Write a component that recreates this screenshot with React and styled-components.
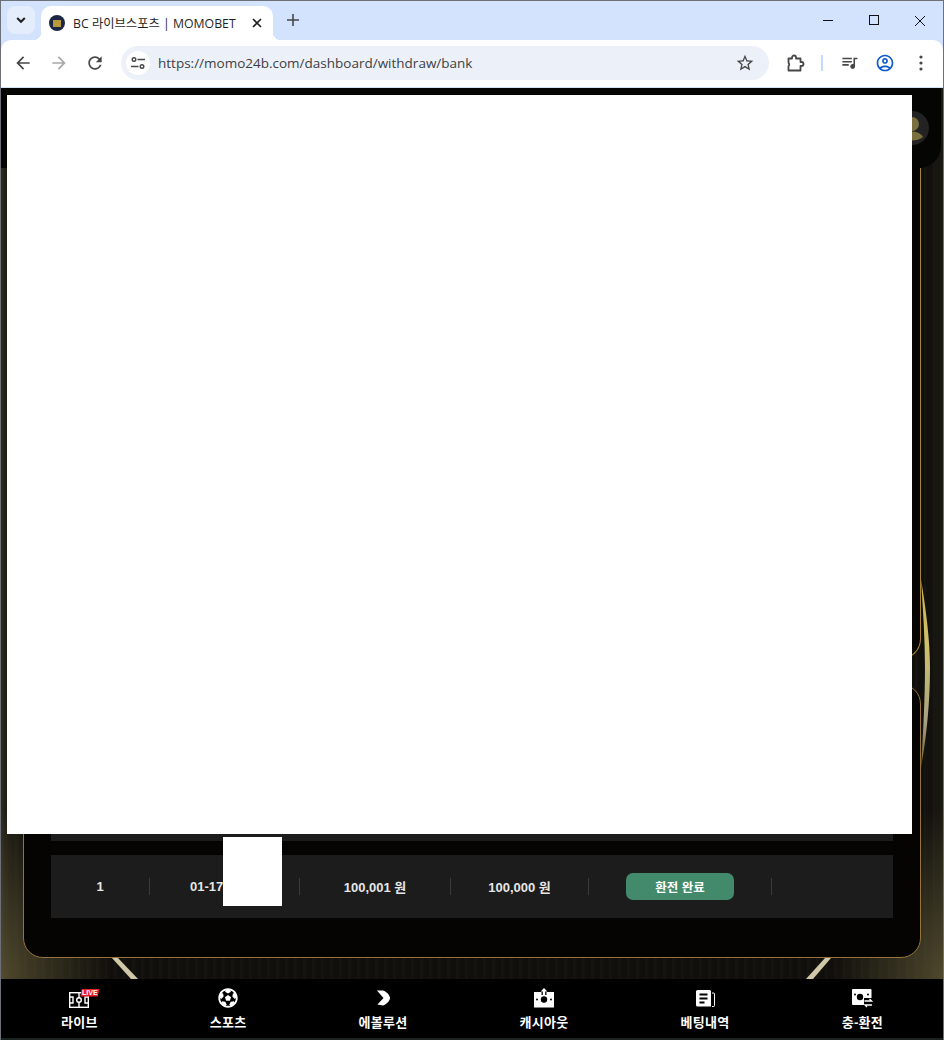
import React from 'react'
import styled, { createGlobalStyle } from 'styled-components'
import { FaFutbol } from 'react-icons/fa'

const GlobalStyle = createGlobalStyle`
    html, body { margin: 0; padding: 0; background: #000; }
    * { box-sizing: border-box; }
`

const UI_FONT = `"Open Sans", "Noto Sans CJK KR", sans-serif`
const PAGE_FONT = `"Liberation Sans", "Noto Sans CJK KR", sans-serif`

const ICONS = {
    back: 'M20 11H7.83l5.59-5.59L12 4l-8 8 8 8 1.41-1.41L7.83 13H20v-2z',
    forward: 'M12 4l-1.41 1.41L16.17 11H4v2h12.17l-5.58 5.59L12 20l8-8z',
    reload: 'M17.65 6.35C16.2 4.9 14.21 4 12 4c-4.42 0-7.99 3.58-7.99 8s3.57 8 7.99 8c3.73 0 6.84-2.55 7.73-6h-2.08c-.82 2.33-3.04 4-5.65 4-3.31 0-6-2.69-6-6s2.69-6 6-6c1.66 0 3.14.69 4.22 1.78L13 11h7V4l-2.35 2.35z',
    star: 'M22 9.24l-7.19-.62L12 2 9.19 8.63 2 9.24l5.46 4.73L5.82 21 12 17.27 18.18 21l-1.63-7.03L22 9.24zM12 15.4l-3.76 2.27 1-4.28-3.32-2.88 4.38-.38L12 6.1l1.71 4.04 4.38.38-3.32 2.88 1 4.28L12 15.4z',
    queue: 'M15 6H3v2h12V6zm0 4H3v2h12v-2zM3 16h8v-2H3v2zM17 6v8.18c-.31-.11-.65-.18-1-.18-1.66 0-3 1.34-3 3s1.34 3 3 3 3-1.34 3-3V8h3V6h-5z',
    account: 'M12 2C6.48 2 2 6.48 2 12s4.48 10 10 10 10-4.48 10-10S17.52 2 12 2zM7.35 18.5C8.66 17.56 10.26 17 12 17s3.34.56 4.65 1.5c-1.31.94-2.91 1.5-4.65 1.5s-3.34-.56-4.65-1.5zm10.79-1.38C16.45 15.8 14.32 15 12 15s-4.45.8-6.14 2.12C4.7 15.73 4 13.95 4 12c0-4.42 3.58-8 8-8s8 3.58 8 8c0 1.95-.7 3.73-1.86 5.12zM12 6c-1.93 0-3.5 1.57-3.5 3.5S10.07 13 12 13s3.5-1.57 3.5-3.5S13.93 6 12 6zm0 5c-.83 0-1.5-.67-1.5-1.5S11.17 8 12 8s1.5.67 1.5 1.5S12.83 11 12 11z',
}

const Glyph = ({ d, color = '#474747', size = 20 }) => (
    <svg width={size} height={size} viewBox="0 0 24 24" fill={color}><path d={d} /></svg>
)

const TitleBar = () => (
    <TabStrip>
        <TabSearch>
            <svg width="12" height="12" viewBox="0 0 12 12" fill="none" stroke="#1f1f1f" strokeWidth="2"><path d="M2.2 4l3.8 3.8L9.8 4" /></svg>
        </TabSearch>
        <Tab>
            <Favicon><FaviconCore /></Favicon>
            <TabTitle>BC 라이브스포츠 | MOMOBET</TabTitle>
            <svg width="10" height="10" viewBox="0 0 10 10" stroke="#1f1f1f" strokeWidth="1.6"><path d="M1 1l8 8M9 1l-8 8" /></svg>
        </Tab>
        <NewTab>
            <svg width="12" height="12" viewBox="0 0 12 12" stroke="#474747" strokeWidth="1.6"><path d="M6 0v12M0 6h12" /></svg>
        </NewTab>
        <WindowControls>
            <WindowButton>
                <svg width="11" height="11" viewBox="0 0 11 11" stroke="#111" strokeWidth="1"><path d="M0 5.5h10" /></svg>
            </WindowButton>
            <WindowButton>
                <svg width="11" height="11" viewBox="0 0 11 11" fill="none" stroke="#111" strokeWidth="1"><rect x=".5" y=".5" width="9" height="9" /></svg>
            </WindowButton>
            <WindowButton>
                <svg width="12" height="12" viewBox="0 0 12 12" stroke="#111" strokeWidth="1"><path d="M1 1l10 10M11 1L1 11" /></svg>
            </WindowButton>
        </WindowControls>
    </TabStrip>
)

const AddressBar = () => (
    <Toolbar>
        <ToolButton><Glyph d={ICONS.back} /></ToolButton>
        <ToolButton><Glyph d={ICONS.forward} color="#a8a8a8" /></ToolButton>
        <ToolButton>
            <svg width="20" height="20" viewBox="0 0 24 24"><path d={ICONS.reload} fill="#474747" /></svg>
        </ToolButton>
        <Omnibox>
            <SiteChip>
                <svg width="16" height="16" viewBox="0 0 16 16" fill="none" stroke="#474747" strokeWidth="1.4">
                    <circle cx="4" cy="4.5" r="1.8" />
                    <path d="M7.5 4.5H15M1 11.5h7.5" />
                    <circle cx="12" cy="11.5" r="1.8" />
                </svg>
            </SiteChip>
            <Url>https://momo24b.com/dashboard/withdraw/bank</Url>
            <Glyph d={ICONS.star} />
        </Omnibox>
        <ToolButton>
            <svg width="20" height="20" viewBox="0 0 20 20" fill="none" stroke="#474747" strokeWidth="1.8" strokeLinejoin="round">
                <path d="M3.500 5.500H7V4.500a2 2 0 0 1 4 0V5.500H15.500V9h1a2 2 0 0 1 0 4h-1V17.500H3.500V13.200a2.400 2.400 0 0 0 0-3.400z" />
            </svg>
        </ToolButton>
        <ToolDivider />
        <ToolButton><Glyph d={ICONS.queue} size={19} /></ToolButton>
        <ToolButton><Glyph d={ICONS.account} color="#0b57d0" size={20} /></ToolButton>
        <ToolButton>
            <svg width="4" height="16" viewBox="0 0 4 16" fill="#474747">
                <circle cx="2" cy="2" r="1.6" /><circle cx="2" cy="8" r="1.6" /><circle cx="2" cy="14" r="1.6" />
            </svg>
        </ToolButton>
    </Toolbar>
)

// the gold ring behind the panels, only parts of it stick out
const BackdropArt = () => (
    <Art viewBox="1 88 942 951" width="942" height="951">
        <defs>
            <linearGradient id="arc" x1="0" y1="0" x2="0" y2="1">
                <stop offset="0" stopColor="#c9b552" />
                <stop offset=".35" stopColor="#cfc06a" />
                <stop offset=".75" stopColor="#a8a184" />
                <stop offset="1" stopColor="#6e5d28" />
            </linearGradient>
        </defs>
        <path d="M921 579C926 610 930 640 930 668C930 705 926 740 921 768C923 735 925 700 925 668C925 640 923 610 921 579Z" fill="url(#arc)" />
        <path d="M112 958L118 958L138 979L131 979Z" fill="#cfc9a8" />
        <path d="M825 958L831 958L813 979L806 979Z" fill="#cfc9a8" />
    </Art>
)

const Avatar = () => (
    <AvatarCircle>
        <svg width="34" height="34" viewBox="0 0 34 34" fill="#7a7040">
            <circle cx="17" cy="13" r="7" />
            <path d="M6 26c2.500-4 7-5.500 11-5.500s8.500 1.500 11 5.500c-3 2.500-7 3.500-11 3.500s-8-1-11-3.500z" />
        </svg>
    </AvatarCircle>
)

const HISTORY = [
    { id: '', date: '', request: '', amount: '', done: false },
    { id: '1', date: '01-17', request: '100,001 원', amount: '100,000 원', done: true },
]

const HistoryRow = ({ row }) => (
    <Row>
        <Cell>{row.id}</Cell>
        <DateCell>{row.date}</DateCell>
        <Cell>{row.request}</Cell>
        <Cell>{row.amount}</Cell>
        <Cell>{row.done && <StatusButton>환전 완료</StatusButton>}</Cell>
        <Cell $last />
    </Row>
)

const NAV_ITEMS = [
    { label: '라이브', icon: <LiveIcon /> },
    { label: '스포츠', icon: <FaFutbol size={20} color="#fff" /> },
    { label: '에볼루션', icon: <EvolutionIcon /> },
    { label: '캐시아웃', icon: <CashoutIcon /> },
    { label: '베팅내역', icon: <BetsIcon /> },
    { label: '충-환전', icon: <ExchangeIcon /> },
]

function LiveIcon() {
    return (
        <LiveWrap>
            <svg width="20" height="16" viewBox="0 0 20 16" fill="none" stroke="#fff" strokeWidth="1.4">
                <rect x=".7" y=".7" width="18.600" height="14.600" />
                <path d="M10 1v14M1 5h3v6H1M19 5h-3v6h3" />
                <circle cx="10" cy="8" r="2.300" fill="#000" />
            </svg>
            <LiveBadge>LIVE</LiveBadge>
        </LiveWrap>
    )
}

function EvolutionIcon() {
    return (
        <svg width="15" height="18" viewBox="0 0 16 18" fill="#fff">
            <path d="M1 1H7.500C11.500 2.500 14.500 5.500 15 9C14.500 12.500 11.500 15.500 7.500 17L1.500 16L8 9Z" />
        </svg>
    )
}

function CashoutIcon() {
    return (
        <svg width="20" height="20" viewBox="0 0 20 20">
            <path d="M0 4h7.500v3h5V4H20v15.500H0z" fill="#fff" />
            <path d="M10 0l3.300 3.500H11.200V8H8.800V3.500H6.700z" fill="#fff" />
            <circle cx="10" cy="11.500" r="3.200" fill="#000" />
            <circle cx="3" cy="11.500" r="1" fill="#000" />
            <circle cx="17" cy="11.500" r="1" fill="#000" />
        </svg>
    )
}

function BetsIcon() {
    return (
        <svg width="19" height="17" viewBox="0 0 19 17">
            <path d="M0 1.500A1.500 1.500 0 0 1 1.500 0h12A1.500 1.500 0 0 1 15 1.500V16.500H1.500A1.500 1.500 0 0 1 0 15z" fill="#fff" />
            <path d="M3.500 4.500h8M3.500 8.500h8M3.500 12.500h5" stroke="#000" strokeWidth="1.800" />
            <path d="M16 3h1.500a1 1 0 0 1 1 1v11.500a1 1 0 0 1-1 1H16" fill="none" stroke="#fff" strokeWidth="1" />
        </svg>
    )
}

function ExchangeIcon() {
    return (
        <svg width="21" height="19" viewBox="0 0 21 19">
            <rect x="0" y="0" width="19.500" height="16" rx="1" fill="#fff" />
            <circle cx="8" cy="8" r="3.200" fill="#000" />
            <circle cx="3" cy="5.500" r="1" fill="#000" />
            <circle cx="16" cy="5.500" r="1" fill="#000" />
            <rect x="12" y="9" width="9" height="10" fill="#000" />
            <path d="M12.500 12h7l-2-2M20 16h-7l2 2" fill="none" stroke="#fff" strokeWidth="1.300" />
        </svg>
    )
}

const App = () => (
    <Window>
        <GlobalStyle />
        <TitleBar />
        <AddressBar />
        <Page>
            <BackdropArt />
            <Header><Avatar /></Header>
            <Main>
                <FormPanel />
                <HistoryPanel>
                    {HISTORY.map((row, i) => <HistoryRow key={i} row={row} />)}
                </HistoryPanel>
            </Main>
            <BottomNav>
                {NAV_ITEMS.map(item => (
                    <NavItem key={item.label}>
                        <NavIcon>{item.icon}</NavIcon>
                        <NavLabel>{item.label}</NavLabel>
                    </NavItem>
                ))}
            </BottomNav>
            <FootStrip />
            <FormMask />
            <CellMask />
        </Page>
    </Window>
)

export default App


const Window = styled.div`
    width: 944px;
    height: 1040px;
    border: 1px solid #6d7078;
    border-bottom: 0;
    display: flex;
    flex-direction: column;
    overflow: hidden;
    background: #d3e3fd;
`

const TabStrip = styled.div`
    height: 39px;
    flex: none;
    display: flex;
    align-items: flex-end;
    padding-left: 6px;
    background: #d3e3fd;
`

const TabSearch = styled.div`
    width: 28px;
    height: 28px;
    margin-bottom: 6px;
    border-radius: 8px;
    background: #e4edfc;
    display: flex;
    align-items: center;
    justify-content: center;
`

const Tab = styled.div`
    position: relative;
    width: 232px;
    height: 34px;
    margin-left: 6px;
    padding: 0 11px 0 8px;
    display: flex;
    align-items: center;
    border-radius: 10px 10px 0 0;
    background: #fff;

    &::before, &::after {
        content: '';
        position: absolute;
        bottom: 0;
        width: 8px;
        height: 8px;
    }
    &::before {
        left: -8px;
        background: radial-gradient(circle at 0 0, transparent 8px, #fff 8.500px);
    }
    &::after {
        right: -8px;
        background: radial-gradient(circle at 100% 0, transparent 8px, #fff 8.500px);
    }
`

const Favicon = styled.span`
    width: 16px;
    height: 16px;
    flex: none;
    border-radius: 50%;
    background: #1c2746;
    display: flex;
    align-items: center;
    justify-content: center;
`

const FaviconCore = styled.span`
    width: 8px;
    height: 7px;
    background: #b99a3a;
`

const TabTitle = styled.span`
    flex: 1;
    margin-left: 8px;
    font: 12.300px ${UI_FONT};
    color: #1f1f1f;
    white-space: nowrap;
`

const NewTab = styled.div`
    width: 28px;
    height: 28px;
    margin: 0 0 6px 6px;
    display: flex;
    align-items: center;
    justify-content: center;
`

const WindowControls = styled.div`
    display: flex;
    margin-left: auto;
    align-self: stretch;
`

const WindowButton = styled.div`
    width: 46px;
    display: flex;
    align-items: center;
    justify-content: center;
`

const Toolbar = styled.div`
    height: 47px;
    flex: none;
    display: flex;
    align-items: center;
    padding: 0 4px 2px;
    background: #fff;
    border-radius: 10px 10px 0 0;
`

const ToolButton = styled.div`
    width: 36px;
    height: 34px;
    flex: none;
    display: flex;
    align-items: center;
    justify-content: center;
`

const Omnibox = styled.div`
    width: 648px;
    height: 34px;
    margin: 0 8px;
    padding: 0 14px 0 5px;
    flex: none;
    display: flex;
    align-items: center;
    border-radius: 17px;
    background: #ecf1f9;
`

const SiteChip = styled.div`
    width: 24px;
    height: 24px;
    flex: none;
    border-radius: 50%;
    background: #fff;
    display: flex;
    align-items: center;
    justify-content: center;
`

const Url = styled.span`
    flex: 1;
    margin-left: 8px;
    font: 13.500px ${UI_FONT};
    color: #3c4043;
    white-space: nowrap;
`

const ToolDivider = styled.div`
    width: 18px;
    height: 16px;
    flex: none;
    display: flex;
    justify-content: center;

    &::before {
        content: '';
        width: 2px;
        background: #c6dafc;
    }
`

const Page = styled.div`
    position: relative;
    flex: 1;
    margin-top: 1px;
    display: flex;
    flex-direction: column;
    overflow: hidden;
    font-family: ${PAGE_FONT};
    background:
        radial-gradient(ellipse 110px 170px at 0 890px, rgba(96, 88, 54, .75), transparent),
        radial-gradient(ellipse 110px 170px at 942px 890px, rgba(96, 88, 54, .75), transparent),
        linear-gradient(90deg, rgba(66, 62, 42, .6) 0, rgba(50, 46, 32, .3) 6px, transparent 24px),
        linear-gradient(270deg, rgba(40, 38, 28, .4) 0, transparent 16px),
        repeating-linear-gradient(90deg, #100f0c 0, #100f0c 5px, #161410 5px, #161410 7px, #12110d 7px, #12110d 9px);
`

const Art = styled.svg`
    position: absolute;
    top: 0;
    left: 0;
    pointer-events: none;
`

const Header = styled.header`
    position: relative;
    height: 80px;
    margin-right: 2px;
    padding-right: 12px;
    flex: none;
    display: flex;
    align-items: center;
    justify-content: flex-end;
    background: #050504;
    border-bottom-right-radius: 22px;
`

const AvatarCircle = styled.div`
    width: 34px;
    height: 34px;
    border-radius: 50%;
    overflow: hidden;
    background: #232323;
`

const Main = styled.main`
    position: relative;
    flex: 1;
    padding: 0 22px 21px;
    display: flex;
    flex-direction: column;
    gap: 25px;
`

const FormPanel = styled.section`
    height: 491px;
    flex: none;
    border: 1px solid #a98636;
    border-top: 0;
    border-radius: 0 0 20px 20px;
    background: #060504;
`

const HistoryPanel = styled.section`
    flex: 1;
    padding: 0 27px 39px;
    display: flex;
    flex-direction: column;
    justify-content: flex-end;
    gap: 14px;
    border: 1px solid #94743a;
    border-radius: 20px;
    background: #050403;
`

const Row = styled.div`
    height: 63px;
    flex: none;
    display: grid;
    grid-template-columns: 99px 150px 151px 138px 183px 121px;
    align-items: center;
    background: #1c1c1c;
`

const Cell = styled.div`
    height: 17px;
    display: flex;
    align-items: center;
    justify-content: center;
    border-right: ${p => (p.$last ? '0' : '1px solid #3a3a3a')};
    font-size: 13px;
    font-weight: 700;
    color: #e6e6e6;
    white-space: nowrap;
`

const DateCell = styled(Cell)`
    justify-content: flex-start;
    padding-left: 40px;
`

const StatusButton = styled.div`
    width: 108px;
    height: 27px;
    flex: none;
    border-radius: 7px;
    background: #428a6b;
    color: #fff;
    font-size: 12.500px;
    display: flex;
    align-items: center;
    justify-content: center;
`

const BottomNav = styled.nav`
    position: relative;
    height: 59px;
    flex: none;
    padding-top: 9px;
    display: flex;
    justify-content: center;
    gap: 112px;
    background: #000;
`

const NavItem = styled.div`
    display: flex;
    flex-direction: column;
    align-items: center;
    gap: 7px;
`

const NavIcon = styled.div`
    height: 20px;
    display: flex;
    align-items: center;
    justify-content: center;
`

const NavLabel = styled.span`
    font-size: 13px;
    line-height: 15px;
    font-weight: 700;
    letter-spacing: .3px;
    color: #fff;
    white-space: nowrap;
`

const LiveWrap = styled.div`
    position: relative;
    width: 20px;
    height: 16px;
    margin-top: 3px;
`

const LiveBadge = styled.span`
    position: absolute;
    top: -3px;
    left: 11px;
    width: 19px;
    height: 8px;
    background: #e8222c;
    color: #fff;
    font-size: 7px;
    line-height: 8px;
    font-weight: 700;
    text-align: center;
    clip-path: polygon(8% 0, 100% 0, 92% 100%, 0 100%);
`

const FootStrip = styled.div`
    position: relative;
    height: 2px;
    flex: none;
    background: #1a231f;
`

const FormMask = styled.div`
    position: absolute;
    top: 7px;
    left: 6px;
    width: 905px;
    height: 739px;
    background: #fff;
`

const CellMask = styled.div`
    position: absolute;
    top: 749px;
    left: 222px;
    width: 59px;
    height: 69px;
    background: #fff;
`
